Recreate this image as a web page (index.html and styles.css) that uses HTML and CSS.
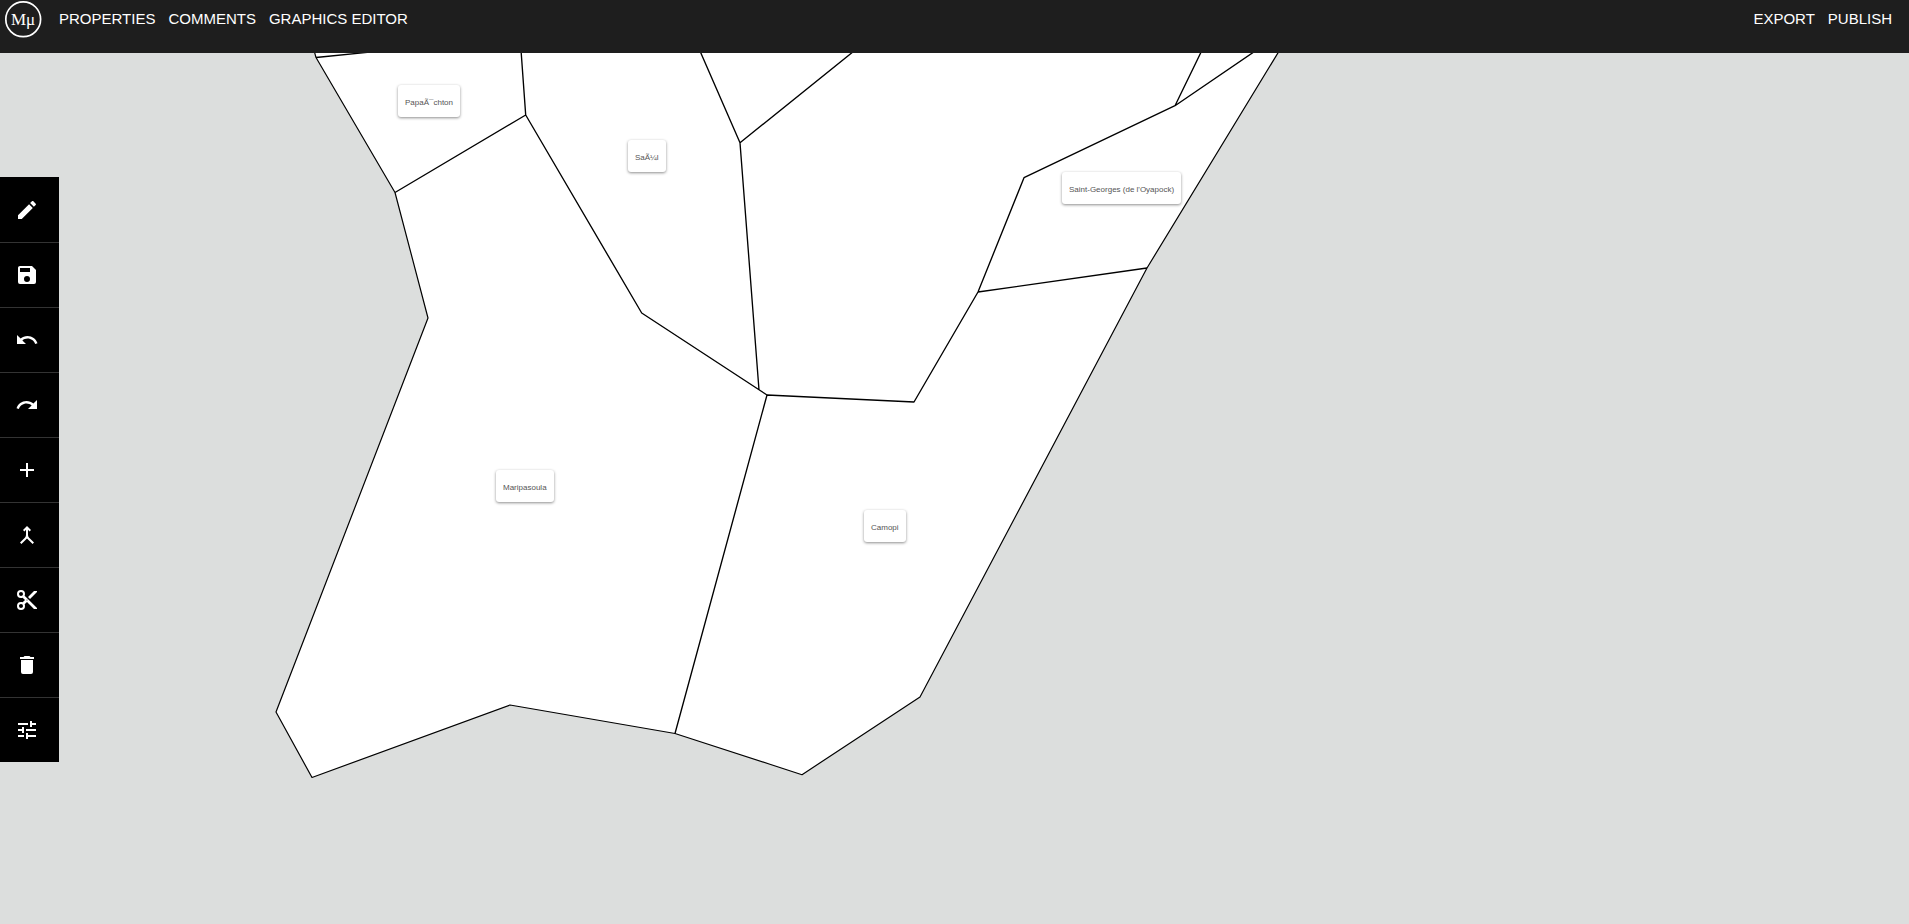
FILE: index.html
```html
<!DOCTYPE html>
<html lang="en">
<head>
<meta charset="utf-8">
<title>Map editor</title>
<link rel="stylesheet" href="styles.css">
</head>
<body>
<header class="topbar">
  <a class="logo" href="#" aria-label="Home">
    <svg width="38" height="38" viewBox="0 0 38 38">
      <circle cx="19.200" cy="19.300" r="17.400" fill="none" stroke="#fff" stroke-width="1.700"/>
      <text class="logo-text" x="19" y="25" text-anchor="middle">Mμ</text>
    </svg>
  </a>
  <nav class="menu">
    <a href="#">PROPERTIES</a>
    <a href="#">COMMENTS</a>
    <a href="#">GRAPHICS EDITOR</a>
  </nav>
  <nav class="menu menu-end">
    <a href="#">EXPORT</a>
    <a href="#">PUBLISH</a>
  </nav>
</header>
<main class="canvas">
  <svg class="map" aria-hidden="true">
    <g transform="translate(0 -53)" fill="#fff" stroke="#000" stroke-linejoin="round">
      <path stroke-width="1.2" d="M312 43L316 57.5L395 192.5L428 318L276 712L312 777.5L510 705L675 733.5L802 774.7L920 697L1147 268L1284 43Z"/>
      <path stroke-width="1.35" fill="none" d="M316 57.5L460 43M520.5 43L525.7 115L395 192.5M525.7 115L641.7 313L767 395L675 733.5M696.5 43L740 142.700L759 390M740 142.700L864 43M767 395L914 402L978 292L1024 177.700L1175 105.700L1205.500 43M1175 105.700L1267 43M978 292L1147 268"/>
    </g>
  </svg>
  <span class="label papaichton">PapaÃ¯chton</span>
  <span class="label saul">SaÃ¼l</span>
  <span class="label saint-georges">Saint-Georges (de l'Oyapock)</span>
  <span class="label maripasoula">Maripasoula</span>
  <span class="label camopi">Camopi</span>
  <div class="toolbar" role="toolbar" aria-label="Edit">
    <button class="tool" aria-label="Edit"><svg viewBox="0 0 24 24"><path d="M20.71,7.04C21.1,6.65 21.1,6 20.71,5.63L18.37,3.29C18,2.9 17.35,2.9 16.96,3.29L15.12,5.12L18.87,8.87M3,17.25V21H6.75L17.81,9.93L14.06,6.18L3,17.25Z"/></svg></button>
    <button class="tool" aria-label="Save"><svg viewBox="0 0 24 24"><path d="M15,9H5V5H15M12,19A3,3 0 0,1 9,16A3,3 0 0,1 12,13A3,3 0 0,1 15,16A3,3 0 0,1 12,19M17,3H5C3.89,3 3,3.9 3,5V19A2,2 0 0,0 5,21H19A2,2 0 0,0 21,19V7L17,3Z"/></svg></button>
    <button class="tool" aria-label="Undo"><svg viewBox="0 0 24 24"><path d="M12.5,8C9.85,8 7.45,9 5.6,10.6L2,7V16H11L7.38,12.38C8.77,11.22 10.54,10.5 12.5,10.5C16.04,10.5 19.1,12.81 20.15,16L22.5,15.22C21.08,11.03 17.15,8 12.5,8Z"/></svg></button>
    <button class="tool" aria-label="Redo"><svg viewBox="0 0 24 24"><path d="M18.4,10.6C16.55,9 14.15,8 11.5,8C6.85,8 2.92,11.03 1.54,15.22L3.9,16C4.95,12.81 8,10.5 11.5,10.5C13.45,10.5 15.23,11.22 16.62,12.38L13,16H22V7L18.4,10.6Z"/></svg></button>
    <button class="tool" aria-label="Add"><svg viewBox="0 0 24 24"><path d="M19,13H13V19H11V13H5V11H11V5H13V11H19V13Z"/></svg></button>
    <button class="tool" aria-label="Merge"><svg viewBox="0 0 24 24"><path d="M6.41 21 5 19.59l4.83-4.83c.75-.75 1.17-1.77 1.17-2.83v-5.1L9.41 8.41 8 7l4-4 4 4-1.41 1.41L13 6.83v5.1c0 1.06.42 2.08 1.17 2.83L19 19.59 17.59 21 12 15.41 6.41 21z"/></svg></button>
    <button class="tool" aria-label="Split"><svg viewBox="0 0 24 24"><path d="M19,3L13,9L15,11L22,4V3M12,12.5A0.5,0.5 0 0,1 11.5,12A0.5,0.5 0 0,1 12,11.500A0.5,0.5 0 0,1 12.5,12A0.5,0.5 0 0,1 12,12.5M6,20A2,2 0 0,1 4,18C4,16.89 4.9,16 6,16A2,2 0 0,1 8,18C8,19.11 7.1,20 6,20M6,8A2,2 0 0,1 4,6C4,4.89 4.9,4 6,4A2,2 0 0,1 8,6C8,7.11 7.1,8 6,8M9.64,7.64C9.87,7.14 10,6.59 10,6A4,4 0 0,0 6,2A4,4 0 0,0 2,6A4,4 0 0,0 6,10C6.59,10 7.14,9.87 7.64,9.64L10,12L7.64,14.36C7.14,14.13 6.59,14 6,14A4,4 0 0,0 2,18A4,4 0 0,0 6,22A4,4 0 0,0 10,18C10,17.41 9.87,16.86 9.64,16.36L12,14L19,21H22V20L9.64,7.64Z"/></svg></button>
    <button class="tool" aria-label="Delete"><svg viewBox="0 0 24 24"><path d="M19,4H15.5L14.5,3H9.5L8.5,4H5V6H19M6,19A2,2 0 0,0 8,21H16A2,2 0 0,0 18,19V7H6V19Z"/></svg></button>
    <button class="tool" aria-label="Settings"><svg viewBox="0 0 24 24"><path d="M3,17V19H9V17H3M3,5V7H13V5H3M13,21V19H21V17H13V15H11V21H13M7,9V11H3V13H7V15H9V9H7M21,13V11H11V13H21M15,9H17V7H21V5H17V3H15V9Z"/></svg></button>
  </div>
</main>
</body>
</html>
```
FILE: styles.css
```css
* {
  box-sizing: border-box;
}

body {
  margin: 0;
  min-height: 100vh;
  display: flex;
  flex-direction: column;
  font-family: "Liberation Sans", Arial, sans-serif;
  background: #dcdedd;
}

.topbar {
  display: flex;
  align-items: flex-start;
  padding: 0 17px 15px 4px;
  background: #1e1e1e;
}

.logo,
.logo svg {
  display: block;
}

.logo-text {
  fill: #fff;
  font: 17px "Liberation Serif", "Times New Roman", serif;
}

.menu {
  display: flex;
  gap: 13px;
  margin-left: 17px;
  font-size: 15px;
  line-height: 38px;
}

.menu a {
  color: #fff;
  text-decoration: none;
}

.menu-end {
  margin-left: auto;
}

.canvas {
  position: relative;
  flex: 1;
  overflow: hidden;
}

.map {
  position: absolute;
  inset: 0;
  width: 100%;
  height: 100%;
}

.label {
  position: absolute;
  padding: 13px 7px 9px;
  border-radius: 3px;
  background: #fff;
  color: #555;
  font-size: 8px;
  line-height: 10px;
  white-space: nowrap;
  box-shadow: 0 1px 3px rgba(0, 0, 0, 0.45);
}

.papaichton {
  left: 398px;
  top: 32px;
}

.saul {
  left: 628px;
  top: 87px;
}

.saint-georges {
  left: 1062px;
  top: 119px;
}

.maripasoula {
  left: 496px;
  top: 417px;
}

.camopi {
  left: 864px;
  top: 457px;
}

.toolbar {
  position: absolute;
  left: 0;
  top: 124px;
  display: flex;
  flex-direction: column;
  background: #000;
}

.tool {
  padding: 20px 20px 20px 15px;
  border: 0;
  border-top: 1px solid #333;
  background: #000;
  cursor: pointer;
}

.tool:first-child {
  border-top-color: #000;
}

.tool svg {
  display: block;
  width: 24px;
  height: 24px;
  fill: #fff;
}
```
